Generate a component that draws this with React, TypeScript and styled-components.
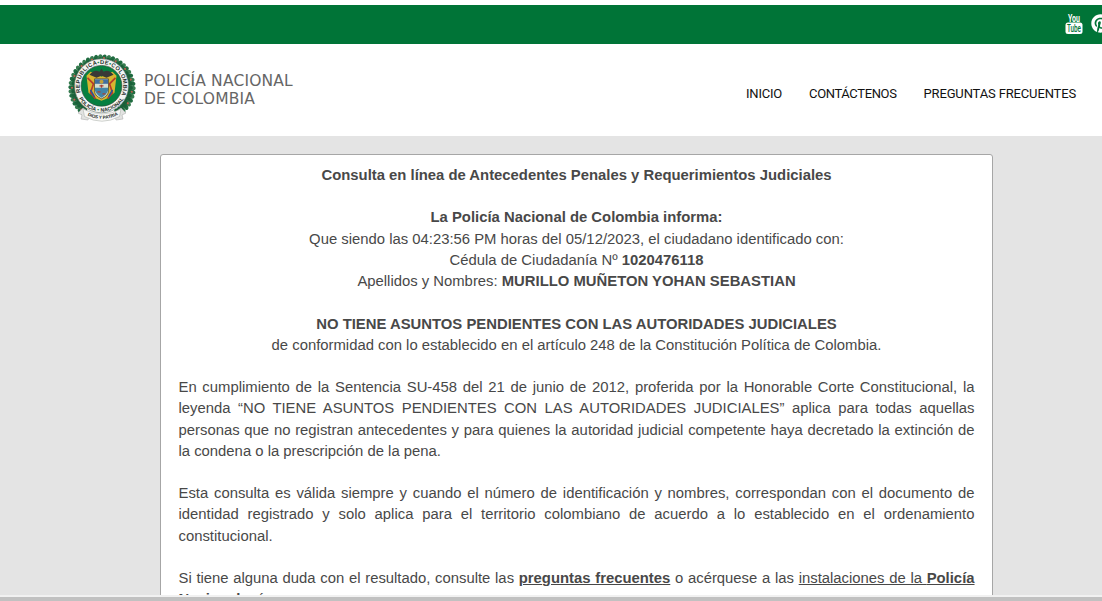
import React from "react";
import styled, { createGlobalStyle } from "styled-components";
import { FaPinterest } from "react-icons/fa";

const GlobalStyle = createGlobalStyle`
  *, *::before, *::after { box-sizing: border-box; }
  body { margin: 0; overflow: hidden; background: #fff; }
`;

const Page = styled.div`
  display: flex;
  flex-direction: column;
  width: 100%;
  height: 601px;
  overflow: hidden;
  font-family: "Liberation Sans", Arial, sans-serif;
`;

const TopBar = styled.div`
  flex: none;
  display: flex;
  align-items: center;
  justify-content: flex-end;
  gap: 8px;
  height: 39px;
  margin-top: 5px;
  padding-bottom: 3px;
  background: #007437;
  color: #fff;
  overflow: hidden;
`;

const SocialLink = styled.a`
  flex: none;
  display: flex;
  color: #fff;

  &:last-child { margin-right: -8px; }
`;

const Header = styled.header`
  flex: none;
  display: flex;
  justify-content: space-between;
  height: 92px;
  padding: 9px 26px 0 66px;
  background: #fff;
`;

const Brand = styled.div`
  display: flex;
  align-items: flex-start;
  gap: 6px;
`;

const BrandName = styled.div`
  padding-top: 19px;
  font: 15.5px/18px "DejaVu Sans", Verdana, sans-serif;
  letter-spacing: 0.18px;
  color: #666;
  white-space: nowrap;
`;

const Nav = styled.nav`
  display: flex;
  gap: 27px;
  padding-top: 31px;
`;

const NavLink = styled.a<{ $tracking?: number }>`
  font: 13px/20px Roboto, sans-serif;
  letter-spacing: ${(p) => p.$tracking ?? -0.15}px;
  color: #111;
  white-space: nowrap;
`;

const Content = styled.main`
  flex: 1;
  min-height: 0;
  padding: 18px 109px 0 160px;
  background: #e4e4e4;
  overflow: hidden;
`;

const Card = styled.section`
  height: 520px;
  padding: 9.7px 17.5px 0;
  background: #fff;
  border: 1px solid #a6a6a6;
  border-radius: 3px;
  font-size: 14.857px;
  line-height: 21.22px;
  color: #484848;
`;

const Block = styled.p<{ $align?: "center" | "justify" }>`
  margin: 0 0 21.22px;
  text-align: ${(p) => p.$align ?? "justify"};

  &:first-child { margin-bottom: 21.5px; }
`;

const Line = styled.span`
  display: block;
  white-space: nowrap;
`;

const FullLine = styled(Line)`
  text-align-last: justify;
`;

const Strong = styled.strong<{ $underlined?: boolean }>`
  font-weight: 700;
  text-decoration: ${(p) => (p.$underlined ? "underline" : "none")};
`;

const Underlined = styled.span`
  text-decoration: underline;
`;

const ScrollTrack = styled.div`
  flex: none;
  height: 6px;
  background: #c1c1c1;
  border-top: 2px solid #f1f1f1;
`;

const YoutubeIcon = () => (
  <svg width="18" height="23" viewBox="0 0 18 23">
    <g fontFamily="Roboto, sans-serif" fontWeight="700">
      <text x="3" y="9.6" fontSize="11" fill="#fff" textLength="12" lengthAdjust="spacingAndGlyphs">You</text>
      <rect x="0.5" y="10.5" width="17" height="11.5" rx="2.5" fill="#fff" />
      <text x="2" y="19.8" fontSize="10" fontWeight="500" fill="#007437" textLength="14" lengthAdjust="spacingAndGlyphs">Tube</text>
    </g>
  </svg>
);

const leaves = Array.from({ length: 38 }, (_, i) => -234 + i * 7.78);

const Seal = () => (
  <svg width="72" height="70" viewBox="-36 -35 72 70">
    <defs>
      <path id="arcTop" d="M-20.5 7.5 A21.8 21.8 0 1 1 20.5 7.5" />
      <path id="arcBottom" d="M-24.2 9 A25.8 25.8 0 0 0 24.2 9" />
      <path id="arcMotto" d="M-16 26.8 Q0 35 16 26.8" />
    </defs>
    {leaves.map((a, i) => (
      <g key={a} transform={`rotate(${a})`}>
        <ellipse cx="30.6" rx="3.2" ry="2.1" transform="rotate(28 30.6 0)" fill={i % 2 ? "#1f6b40" : "#377c50"} />
        <ellipse cx="27.6" cy="1" rx="3.4" ry="2.2" transform="rotate(-28 27.6 1)" fill="#1a6039" />
      </g>
    ))}
    {leaves.filter((_, i) => i % 3 === 1).map((a) => (
      <circle key={a} cx="30" r="1.1" transform={`rotate(${a})`} fill="#b8604f" />
    ))}
    <path d="M-19 20 L-24 25 L-20 27 L-21 31 L-14 32 L-12 25Z M19 20 L24 25 L20 27 L21 31 L14 32 L12 25Z" fill="#e2e3e1" stroke="#b0b0b0" strokeWidth="0.6" />
    <path d="M-19 21 Q0 31 19 21 L17.5 28.5 Q0 38 -17.5 28.5Z" fill="#f7f7f5" stroke="#a4aaa5" strokeWidth="0.5" />
    <g transform="translate(-0.5 -2.2)">
      <circle r="27" fill="#f4f5f2" stroke="#68766d" strokeWidth="0.6" />
      <circle r="20.4" fill="#078040" stroke="#34433b" strokeWidth="0.6" />
      <g fontFamily="Liberation Sans, sans-serif" fontWeight="700" fill="#29302c">
        <text fontSize="5.7"><textPath href="#arcTop" startOffset="1" textLength="84" lengthAdjust="spacing">REPÚBLICA<tspan fill="#16834a">•</tspan>DE<tspan fill="#16834a">•</tspan>COLOMBIA</textPath></text>
        <text fontSize="5.2"><textPath href="#arcBottom" startOffset="4" textLength="54" lengthAdjust="spacing">POLICÍA <tspan fill="#16834a">•</tspan> NACIONAL</textPath></text>
      </g>
      <path d="M-15 -10 L-11 -14 L-5 -12 L0 -9 L5 -12 L11 -14 L15 -10 L13 7 L5 13 L0 15 L-5 13 L-13 7Z" fill="#d8b52f" />
      <path d="M-14 -8 L-8 -2 L-11 7 L-6 13 M14 -8 L8 -2 L11 7 L6 13" fill="none" stroke="#b63b2c" strokeWidth="1.7" />
      <path d="M-11 4 L-7 11 M11 4 L7 11" stroke="#28529a" strokeWidth="1.5" />
      <path d="M-12 -11 Q-7 -17 -2 -14 L0 -17 L2 -14 Q7 -17 12 -11 L5 -8 L0 -10 L-5 -8Z" fill="#393a37" />
      <path d="M-7 -7 H7 V5 Q7 10 0 13 Q-7 10 -7 5Z" fill="#d7dfcf" stroke="#584b28" strokeWidth="0.8" />
      <path d="M-6.5 -6.5 H6.5 V-2 H-6.5Z" fill="#426fa0" />
      <path d="M-6.5 2 H6.5 V5 Q5 9 0 12 Q-5 9 -6.5 5Z" fill="#4385a8" />
      <circle cy="-4" r="2" fill="#c3a23b" />
      <path d="M-2 0 H2 M0 -1 V2 M-4 6 H-1 M1 8 H4" stroke="#a94134" strokeWidth="1.3" />
    </g>
    <text fontFamily="Liberation Sans, sans-serif" fontWeight="700" fill="#29302c" fontSize="4.6">
      <textPath href="#arcMotto" startOffset="1.5" textLength="32" lengthAdjust="spacing">DIOS Y PATRIA</textPath>
    </text>
  </svg>
);

export default function App() {
  return (
    <Page>
      <GlobalStyle />
      <TopBar>
        <SocialLink aria-label="YouTube"><YoutubeIcon /></SocialLink>
        <SocialLink aria-label="Pinterest"><FaPinterest size={19} /></SocialLink>
      </TopBar>
      <Header>
        <Brand>
          <Seal />
          <BrandName>
            <Line>POLICÍA NACIONAL</Line>
            <Line>DE COLOMBIA</Line>
          </BrandName>
        </Brand>
        <Nav>
          <NavLink $tracking={-0.2}>INICIO</NavLink>
          <NavLink $tracking={-0.37}>CONTÁCTENOS</NavLink>
          <NavLink>PREGUNTAS FRECUENTES</NavLink>
        </Nav>
      </Header>
      <Content>
        <Card>
          <Block $align="center">
            <Strong>Consulta en línea de Antecedentes Penales y Requerimientos Judiciales</Strong>
          </Block>
          <Block $align="center">
            <Line><Strong>La Policía Nacional de Colombia informa:</Strong></Line>
            <Line>Que siendo las 04:23:56 PM horas del 05/12/2023, el ciudadano identificado con:</Line>
            <Line>Cédula de Ciudadanía Nº <Strong>1020476118</Strong></Line>
            <Line>Apellidos y Nombres: <Strong>MURILLO MUÑETON YOHAN SEBASTIAN</Strong></Line>
          </Block>
          <Block $align="center">
            <Line><Strong>NO TIENE ASUNTOS PENDIENTES CON LAS AUTORIDADES JUDICIALES</Strong></Line>
            <Line>de conformidad con lo establecido en el artículo 248 de la Constitución Política de Colombia.</Line>
          </Block>
          <Block>
            <FullLine>En cumplimiento de la Sentencia SU-458 del 21 de junio de 2012, proferida por la Honorable Corte Constitucional, la</FullLine>
            <FullLine>leyenda “NO TIENE ASUNTOS PENDIENTES CON LAS AUTORIDADES JUDICIALES” aplica para todas aquellas</FullLine>
            <FullLine>personas que no registran antecedentes y para quienes la autoridad judicial competente haya decretado la extinción de</FullLine>
            <Line>la condena o la prescripción de la pena.</Line>
          </Block>
          <Block>
            <FullLine>Esta consulta es válida siempre y cuando el número de identificación y nombres, correspondan con el documento de</FullLine>
            <FullLine>identidad registrado y solo aplica para el territorio colombiano de acuerdo a lo establecido en el ordenamiento</FullLine>
            <Line>constitucional.</Line>
          </Block>
          <Block>
            <FullLine>
              Si tiene alguna duda con el resultado, consulte las <Strong $underlined>preguntas frecuentes</Strong> o acérquese a las{" "}
              <Underlined>instalaciones de la <Strong>Policía</Strong></Underlined>
            </FullLine>
            <Line><Strong>Nacional</Strong> más cercanas.</Line>
          </Block>
        </Card>
      </Content>
      <ScrollTrack />
    </Page>
  );
}
